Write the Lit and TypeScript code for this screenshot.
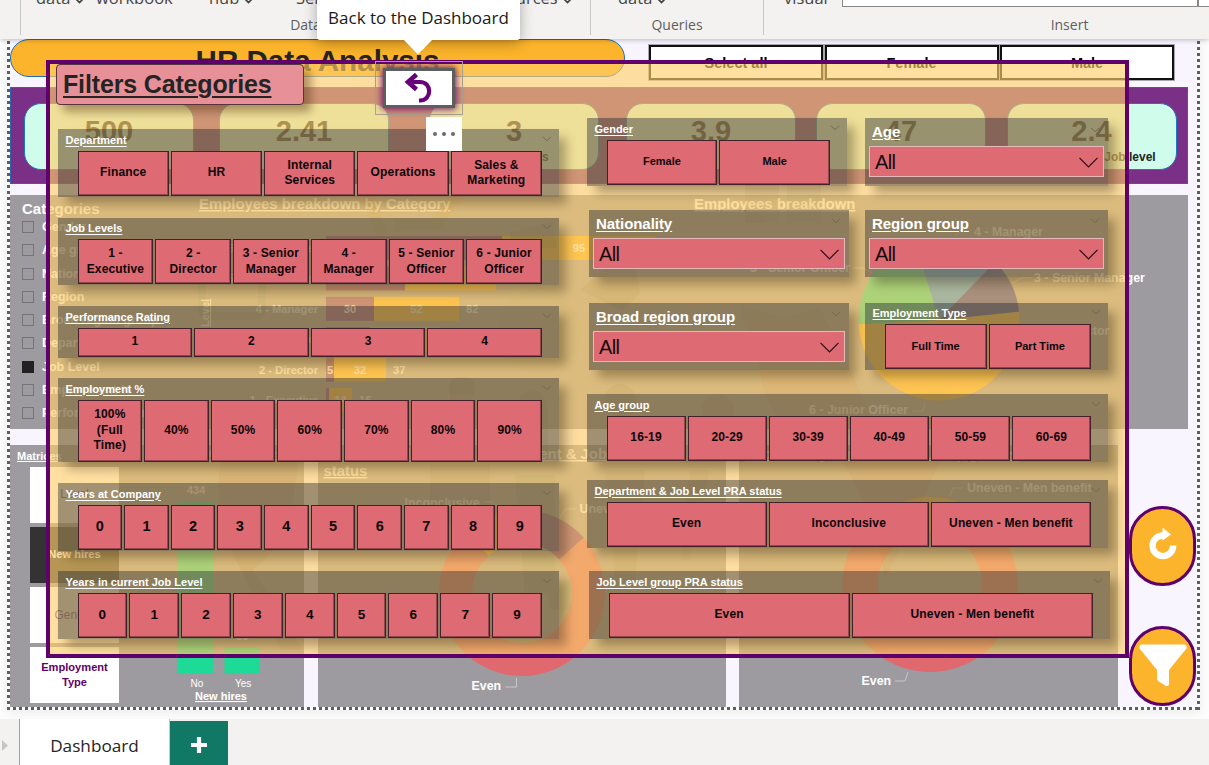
import { LitElement, html, css, svg } from "lit";
import { customElement, property } from "lit/decorators.js";

const arc = (cx: number, cy: number, r: number, ri: number, a: number, b: number) => {
  const p = (rad: number, d: number) => {
    const t = ((d - 90) * Math.PI) / 180;
    return `${(cx + rad * Math.cos(t)).toFixed(2)} ${(cy + rad * Math.sin(t)).toFixed(2)}`;
  };
  const big = b - a > 180 ? 1 : 0;
  return ri
    ? `M${p(r, a)}A${r} ${r} 0 ${big} 1 ${p(r, b)}L${p(ri, b)}A${ri} ${ri} 0 ${big} 0 ${p(ri, a)}Z`
    : `M${cx} ${cy}L${p(r, a)}A${r} ${r} 0 ${big} 1 ${p(r, b)}Z`;
};

@customElement("filter-card")
class FilterCard extends LitElement {
  @property() label = "";
  @property({ type: Array }) items: string[] = [];
  @property({ type: Boolean }) select = false;
  static styles = css`
    :host { display: block; box-sizing: border-box; position: relative; font-family: "Liberation Sans", Arial, sans-serif;
      background: rgba(22, 31, 44, 0.4); box-shadow: 8px 8px 10px -1px rgba(50, 35, 15, 0.36); padding: 0 17px 0 19.5px; }
    :host([select]) { padding: 0 4px; }
    .head { display: flex; justify-content: space-between; height: 21.5px; align-items: center; margin: 0 -8px 0 -12px; }
    .title { font-weight: 700; font-size: 11px; line-height: 14px; color: #fff; text-decoration: underline; text-underline-offset: 2px; white-space: nowrap; }
    .head svg { margin-right: -2px; flex: none; margin-top: -2px; }
    .tiles { display: flex; gap: 2px; height: var(--th, 45px); }
    .tile { flex: 1 1 0; min-width: 0; box-sizing: border-box; display: flex; align-items: center; justify-content: center; text-align: center;
      background: #de6a73; border: 1px solid #43202a; box-shadow: inset -1px -1px 0 #92444f; color: #0d0608;
      font-weight: 700; font-size: var(--fs, 12px); line-height: 15.5px; letter-spacing: var(--ls, 0.15px); padding: 0 var(--px, 5px); }
    :host([select]) .head { height: 28px; margin: 0 0 0 3px; }
    :host([select]) .title { font-size: 15px; line-height: 18px; letter-spacing: -0.05px; }
    :host([select]) .head svg { margin: -5px 4px 0 0; }
    .drop { height: 31px; box-sizing: border-box; border: 1px solid #e5b9bd; background: #de6a73; display: flex; align-items: center; justify-content: space-between;
      padding: 2px 5px 0; font-size: 20px; letter-spacing: -0.6px; color: #160a0c; }
  `;
  render() {
    return html`
      <div class="head"><span class="title">${this.label}</span>
        <svg width="10" height="6" viewBox="0 0 10 6"><path d="M1 .8 5 4.8 9 .8" fill="none" stroke="#716853" stroke-width="1" /></svg></div>
      ${this.select
        ? html`<div class="drop"><span>All</span><svg width="19" height="11" viewBox="0 0 19 11"><path d="M.5.8 9.5 9.8 18.5.8" fill="none" stroke="#2a1014" stroke-width="1.2" /></svg></div>`
        : html`<div class="tiles">${this.items.map((i) => html`<div class="tile"><span>${i}</span></div>`)}</div>`}
    `;
  }
}

@customElement("filter-panel")
class FilterPanel extends LitElement {
  static styles = css`
    :host { display: block; box-sizing: border-box; border: 4px solid #5f006c; outline: 0;
      background: rgba(255, 206, 106, 0.64); background-clip: padding-box; font-family: "Liberation Sans", Arial, sans-serif; }
    .top { display: flex; height: 54px; }
    .name { box-sizing: border-box; width: 248px; height: 41px; margin: 0 0 0 6px; padding-left: 6px; background: #e89098; border: 1px solid #57333a; border-radius: 4px;
      font-weight: 700; font-size: 25px; letter-spacing: -0.15px; line-height: 39px; color: #252423; text-decoration: underline; text-underline-offset: 3px; text-decoration-thickness: 2px; box-shadow: 7px 7px 9px rgba(70, 40, 10, 0.4); white-space: nowrap; }
    .frame { box-sizing: border-box; width: 88px; height: 54px; margin: -3px 0 0 71px; border: 1px solid #a9a391; padding: 6px 7px; }
    .back { box-sizing: border-box; height: 40px; border: 3px solid #5e5e5e; background: #fff; box-shadow: 0 0 7px 1px #6a1070; display: flex; justify-content: center; align-items: center; }
    .more { position: absolute; left: 376px; top: 53px; width: 36px; height: 34px; background: #fff; display: flex; gap: 5px; align-items: center; justify-content: center; z-index: 3; }
    .more i { width: 4px; height: 4px; border-radius: 50%; background: #6d6b69; }
    .cols { display: grid; grid-template-columns: 501px 523px; column-gap: 28px; padding-left: 8px; }
    .left { padding-top: 11px; }
    .pair { display: flex; align-items: flex-start; justify-content: space-between; width: 521px; }
    .l2, .l3, .l5 { margin-top: 21px; }
    .l4, .l6 { margin-top: 20.5px; }
    .h68 { height: 67.5px; }
    .h52 { height: 51.5px; --th: 29px; }
    .h84 { height: 84px; --th: 62px; }
    .num { --fs: 14.5px; --px: 0; }
    .num2 { --fs: 13.5px; --px: 0; }
    .narrow { width: 260px; }
    .narrow2 { width: 243px; }
    .small { --fs: 11px; --ls: 0; }
    .g24 { margin-top: 24px; }
    .g25 { margin-top: 25.5px; }
    .g18 { margin-top: 18.5px; }
    .g23 { margin-top: 23.5px; }
    .shift { margin-left: 2px; }
    .w { width: 521px; }
  `;
  render() {
    return html`
      <div class="top">
        <div class="name">Filters Categories</div>
        <div class="frame"><div class="back">
          <svg width="30" height="30" viewBox="0 0 30 30" fill="none" stroke="#68007a" stroke-width="4.2"><path d="M12.5 1.500 4 9l8.500 7.500" stroke-width="4.600" /><path d="M5 9h11c12.500 0 12 18.500 0 18.500h-1" /></svg>
        </div></div>
        <div class="more"><i></i><i></i><i></i></div>
      </div>
      <div class="cols">
        <div class="left">
          <filter-card class="h68" label="Department" .items=${["Finance", "HR", "Internal Services", "Operations", "Sales & Marketing"]}></filter-card>
          <filter-card class="h68 l2" label="Job Levels" .items=${["1 - Executive", "2 - Director", "3 - Senior Manager", "4 - Manager", "5 - Senior Officer", "6 - Junior Officer"]}></filter-card>
          <filter-card class="h52 l3" label="Performance Rating" .items=${["1", "2", "3", "4"]}></filter-card>
          <filter-card class="h84 l4" label="Employment %" .items=${["100% (Full Time)", "40%", "50%", "60%", "70%", "80%", "90%"]}></filter-card>
          <filter-card class="h68 l5 num" label="Years at Company" .items=${["0", "1", "2", "3", "4", "5", "6", "7", "8", "9"]}></filter-card>
          <filter-card class="h68 l6 num2" label="Years in current Job Level" .items=${["0", "1", "2", "3", "4", "5", "6", "7", "9"]}></filter-card>
        </div>
        <div class="right">
          <div class="pair">
            <filter-card class="h68 narrow small" label="Gender" .items=${["Female", "Male"]}></filter-card>
            <filter-card class="h68 narrow2" select label="Age"></filter-card>
          </div>
          <div class="pair g24">
            <filter-card class="h68 narrow shift" select label="Nationality"></filter-card>
            <filter-card class="h68 narrow2" select label="Region group"></filter-card>
          </div>
          <div class="pair g25">
            <filter-card class="h68 narrow shift" select label="Broad region group"></filter-card>
            <filter-card class="h68 narrow2 small" label="Employment Type" .items=${["Full Time", "Part Time"]}></filter-card>
          </div>
          <filter-card class="h68 w g24" label="Age group" .items=${["16-19", "20-29", "30-39", "40-49", "50-59", "60-69"]}></filter-card>
          <filter-card class="h68 w g18" label="Department & Job Level PRA status" .items=${["Even", "Inconclusive", "Uneven - Men benefit"]}></filter-card>
          <filter-card class="h68 w g23 shift" label="Job Level group PRA status" .items=${["Even", "Uneven - Men benefit"]}></filter-card>
        </div>
      </div>
    `;
  }
}

@customElement("app-root")
class AppRoot extends LitElement {
  static styles = css`
    :host { display: flex; flex-direction: column; width: 1209px; height: 765px; overflow: hidden; position: relative; background: #fdfdfd; font-family: "Liberation Sans", Arial, sans-serif; }
    .ribbon { height: 39px; flex: none; background: #f3f2f1; display: grid; grid-template-columns: 20px 570px 173px 446px; box-shadow: 0 1px 5px rgba(0, 0, 0, 0.25); position: relative; z-index: 1;
      font-family: "Open Sans", "Noto Sans", sans-serif; color: #484644; }
    .group { border-left: 1px solid #c8c6c4; height: 35px; display: flex; flex-direction: column; box-sizing: border-box; }
    .cmds { height: 18px; display: flex; font-size: 16.5px; line-height: 20px; overflow: hidden; }
    .cmds span { margin-top: -12px; height: 22px; white-space: nowrap; flex: none; box-sizing: border-box; }
    .caret { display: inline-block; margin-left: 5px; }
    .s1 { width: 75px; padding-left: 15px; } .s2 { width: 113px; } .s3 { width: 87px; } .s4 { width: 202px; } .s5 { padding-left: 27px; } .s6 { width: 78px; padding-left: 20px; }
    .gl { font-size: 14px; line-height: 20px; margin-top: 1px; color: #605e5c; text-align: center; }
    .ins { padding-left: 166px; }
    .box { box-sizing: border-box; height: 7px; width: 356px; background: #fff; border: 1px solid #8a8886; border-top: 0; flex: none; }
    .stage { box-sizing: border-box; width: 1193px; height: 671px; margin-left: 7px; flex: none; padding: 0 3px 3px; position: relative;
      background: repeating-linear-gradient(#5e5e5e 0 3px, #fff 3px 6px) 0 2px / 3px 100% no-repeat,
        repeating-linear-gradient(#5e5e5e 0 3px, #fff 3px 6px) 100% 2px / 3px 100% no-repeat,
        repeating-linear-gradient(90deg, #5e5e5e 0 3px, #fff 3px 6px) 0 100% / 100% 3px no-repeat, #f8f5ff; box-shadow: 0 2px 10px rgba(0, 0, 0, 0.08); }
    .row { display: flex; }
    .pill { box-sizing: border-box; width: 615px; height: 37.5px; border: 1px solid #1c6fb5; border-radius: 19px; background: #fbb42b; text-align: center; font-weight: 700; font-size: 29.6px; line-height: 41px; color: #252423; }
    .tops { display: flex; gap: 1.5px; margin: 6px 0 0 24px; }
    .tops div { box-sizing: border-box; width: 174px; height: 35px; border: 2px solid #111; outline: 1px solid #aaa6ae; background: #fff; text-align: center; font-weight: 700; font-size: 14.5px; line-height: 32px; }
    .kpis { box-sizing: border-box; display: flex; width: 1178px; height: 97.5px; margin-top: 6.5px; background: #7b3087; border: 1px solid #2a66b0; padding: 15.500px 0 0 13px; }
    .kpi { box-sizing: border-box; width: 170px; flex: none; height: 67px; border: 1px solid #1c78bf; border-radius: 17px; background: #d0fdeb; text-align: center; color: #252423; padding-top: 10.500px; }
    .kpi b { display: block; font-size: 29px; line-height: 32px; }
    .kpi span { font-weight: 700; font-size: 12px; line-height: 21px; display: block; white-space: nowrap; }
    .yrs { padding-left: 38px; } .lvl { padding-left: 77px; }
    .m25 { margin-left: 25px; } .m40 { margin-left: 40px; } .m27 { margin-left: 27px; } .m20 { margin-left: 20px; } .m21 { margin-left: 20.5px; }
    .sheet { width: 1178px; height: 234px; margin-top: 10.5px; background: #9e9ba0; display: flex; color: #fff; }
    .cats { width: 182px; padding: 5px 0 0 12px; box-sizing: border-box; font-weight: 700; flex: none; }
    .cats h3 { margin: 0 0 -2px; font-size: 15px; line-height: 18px; }
    .opt { display: flex; align-items: center; gap: 8px; height: 23.25px; font-size: 12.500px; white-space: nowrap; }
    .opt i { box-sizing: border-box; width: 12px; height: 12px; border: 1px solid #777479; flex: none; }
    .opt .on { background: #222; border-color: #222; }
    svg { display: block; flex: none; overflow: visible; }
    svg text { font-family: "Liberation Sans", Arial, sans-serif; font-weight: 700; fill: #fff; font-size: 12.4px; }
    svg .b { font-size: 11.2px; }
    svg .s { font-size: 11px; }
    svg .n { font-size: 10px; font-weight: 400; }
    svg .t { font-size: 14.9px; text-decoration: underline; }
    .bottom { display: flex; gap: 13.500px; margin-top: 16px; color: #fff; }
    .c1, .c2, .c3 { height: 262.500px; background: #9e9ba0; }
    .c1 { width: 294px; display: flex; } .c2 { width: 408px; } .c3 { width: 379px; }
    .mat { width: 108px; padding: 5px 0 0 7px; box-sizing: border-box; flex: none; }
    .mat b { font-size: 11px; text-decoration: underline; line-height: 13px; display: block; margin-bottom: 4px; }
    .mb { box-sizing: border-box; width: 89px; height: 56px; margin: 0 0 4.300px 13px; background: #fff; display: flex; align-items: center; justify-content: center; text-align: center; font-weight: 700; font-size: 11.100px; line-height: 15px; color: #5f006c; }
    .dark { background: #333; color: #fff; }
    .fade { font-weight: 400; font-size: 12px; color: #6b2b78; }
    .panel { position: absolute; left: 46px; top: 60px; width: 1083px; height: 598px; z-index: 2; }
    .art { position: absolute; left: 0; top: 0; z-index: 1; }
    .tip { position: absolute; left: 317px; top: -8px; width: 203px; height: 48px; border-radius: 3px; background: #fff; z-index: 5; box-shadow: 0 3px 14px rgba(0, 0, 0, 0.3); text-align: center; font: 17px/52px "Open Sans", sans-serif; color: #1b1a19; white-space: nowrap; }
    .tip svg { position: absolute; left: 86px; top: 47px; }
    .round { position: absolute; left: 1129px; box-sizing: border-box; width: 67px; height: 80px; border: 3.500px solid #5f006c; border-radius: 34px; background: #fbb42b; z-index: 3; display: flex; align-items: center; justify-content: center; }
    .r1 { top: 506px; padding-bottom: 7px; } .r2 { top: 626px; }
    .tabs { height: 46px; margin-top: 9px; background: #f3f2f1; display: flex; font-family: "Open Sans", sans-serif; flex: none; }
    .arrow { width: 19px; padding-top: 20px; box-sizing: border-box; }
    .tab { box-sizing: border-box; width: 151px; background: #fff; border-left: 1px solid #a19f9d; border-right: 1px solid #c8c6c4; text-align: center; font-size: 17.2px; line-height: 53px; color: #252423; }
    .plus { width: 58px; background: #117865; margin-top: 2px; display: flex; align-items: center; justify-content: center; padding-top: 4px; box-sizing: border-box; }
  `;

  private caret() {
    return html`<svg class="caret" width="9" height="6" viewBox="0 0 9 6"><path d="M1 1l3.500 3.500L8 1" fill="none" stroke="#444" stroke-width="1.700" /></svg>`;
  }

  private bars() {
    const rows: [string, number, number, string, string, string][] = [
      ["6 - Junior Officer", 502, 656, "", "", ""],
      ["5 - Senior Officer", 405, 496, "", "", ""],
      ["4 - Manager", 374, 459, "30", "52", "82"],
      ["3 - Senior Manager", 370, 440, "", "", ""],
      ["2 - Director", 334, 386, "5", "32", "37"],
      ["1 - Executive", 329, 352, "", "14", "16"],
    ];
    return svg`${rows.map(([n, a, b, p, q, t], i) => {
      const y = 41 + i * 30.4;
      return svg`<rect x="134" y=${y} width=${a - 326} height="24" fill="#7b3087"/><rect x=${a - 192} y=${y} width=${b - a} height="24" fill="#fbb42b"/>
        <text class="b" x="126" y=${y + 16} text-anchor="end">${n}</text><text class="b" x=${(326 + a) / 2 - 192} y=${y + 16} text-anchor="middle">${p}</text>
        <text class="b" x=${(a + b) / 2 - 192} y=${y + 16} text-anchor="middle">${i ? q : "95"}</text><text class="b" x=${b - 192 + 7} y=${y + 16}>${t}</text>`;
    })}`;
  }

  render() {
    const opts = ["Gender", "Age group", "Nationality", "Region", "Broad region group", "Department", "Job Level", "Employment %", "Performance rating"];
    return html`
      <div class="ribbon">
        <div></div>
        <div class="group"><div class="cmds"><span class="s1">data${this.caret()}</span><span class="s2">workbook</span><span class="s3">hub${this.caret()}</span><span class="s4">Server</span><span>sources${this.caret()}</span></div><div class="gl">Data</div></div>
        <div class="group"><div class="cmds"><span class="s5">data${this.caret()}</span></div><div class="gl">Queries</div></div>
        <div class="group"><div class="cmds"><span class="s6">visual</span><div class="box"></div><div class="box"></div></div><div class="gl ins">Insert</div></div>
      </div>
      <div class="stage">
        <div class="row"><div class="pill">HR Data Analysis</div><div class="tops"><div>Select all</div><div>Female</div><div>Male</div></div></div>
        <div class="kpis">
          <div class="kpi"><b>500</b></div><div class="kpi m25"><b>2.41</b></div>
          <div class="kpi m40"><b>3</b><span class="yrs">years</span></div>
          <div class="kpi m27"><b>3.9</b></div><div class="kpi m20"><b>47</b></div>
          <div class="kpi m21"><b>2.4</b><span class="lvl">Job level</span></div>
        </div>
        <div class="sheet">
          <div class="cats"><h3>Categories</h3>${opts.map((o) => html`<div class="opt"><i class=${o === "Job Level" ? "on" : ""}></i>${o}</div>`)}</div>
          <svg width="398" height="234" viewBox="0 0 398 234">
            <text class="t" x="7" y="14">Employees breakdown by Category</text>
            <text class="s" transform="translate(17 132) rotate(-90)" text-decoration="underline">Level</text>
            ${this.bars()}
          </svg>
          <svg width="598" height="234" viewBox="590 195 598 234">
            <text class="t" x="694" y="209">Employees breakdown</text>
            <path d=${arc(939, 320, 80.5, 0, 84, 267)} fill="#fbb42b"/><path d=${arc(939, 320, 80.5, 0, 267, 343)} fill="#1ddb97"/>
            <path d=${arc(939, 320, 80.5, 0, 343, 404)} fill="#118dff"/><path d=${arc(939, 320, 80.5, 0, 44, 84)} fill="#12239e"/>
            <text x="974" y="236">4 - Manager</text><text x="1034" y="282">3 - Senior Manager</text><text x="1044" y="335">2 - Director</text>
            <text x="809" y="414">6 - Junior Officer</text><text x="750" y="272">5 - Senior Officer</text>
            <path d="M1012 283l9-5h11M912 411h11l2-9M853 268h10l9 5M955 236l5-5h10" fill="none" stroke="#c8c6ca"/>
          </svg>
        </div>
        <div class="bottom">
          <div class="c1">
            <div class="mat"><b>Matrices</b><div class="mb fade">Level</div><div class="mb dark">New hires</div><div class="mb fade">Gender</div><div class="mb">Employment<br />Type</div></div>
            <svg width="186" height="262" viewBox="118 445 186 262">
              <text x="155" y="458" class="t">Employees by gender</text>
              <rect x="178" y="502" width="35.500" height="171.500" fill="#1ddb97"/><rect x="224.500" y="647" width="35.500" height="26.500" fill="#1ddb97"/>
              <text class="s" x="187" y="494">434</text><text class="s" x="236" y="640">66</text>
              <text class="n" x="190.500" y="687">No</text><text class="n" x="235" y="687">Yes</text>
              <text class="s" x="195" y="700" text-decoration="underline">New hires</text>
            </svg>
          </div>
          <div class="c2"><svg width="408" height="262" viewBox="317.500 445 408 262">
            <text class="t" x="374" y="459">Employees by Department &amp; Job Level PRA</text><text class="t" x="323" y="476">status</text>
            <path d=${arc(521.5, 593, 83, 50, 48, 348)} fill="#e0686f"/><path d=${arc(521.5, 593, 83, 50, 0, 48)} fill="#7b3087"/><path d=${arc(521.5, 593, 83, 50, 318, 360)} fill="#fbb42b"/>
            <text x="404" y="507">Inconclusive</text><text x="579" y="513">Uneven - Men benefit</text><text x="471" y="690">Even</text>
            <path d="M505 687h11v-9M560 517l5-8h10M483 502h9l5 5" fill="none" stroke="#c8c6ca"/>
          </svg></div>
          <div class="c3"><svg width="379" height="262" viewBox="739 445 379 262">
            <text class="t" x="745" y="459">Job Level group PRA status by gender</text>
            <path d=${arc(930, 584.5, 87.5, 52, 36, 360)} fill="#e0686f"/><path d=${arc(930, 584.5, 87.5, 52, -18, 38)} fill="#fbb42b"/>
            <text x="967" y="492">Uneven - Men benefit</text><text x="861.500" y="685">Even</text>
            <path d="M895 681h10l3-9M950 496l3-8h10" fill="none" stroke="#c8c6ca"/>
          </svg></div>
        </div>
      </div>
      <div class="tabs">
        <div class="arrow"><svg width="10" height="13" viewBox="0 0 10 13"><path d="M2 1v11l6-5.500z" fill="#c8c6c4"/></svg></div>
        <div class="tab">Dashboard</div>
        <div class="plus"><svg width="18" height="18" viewBox="0 0 18 18"><path d="M9 1v16M1 9h16" stroke="#fff" stroke-width="4.200"/></svg></div>
      </div>
      <svg class="art" width="1209" height="765" viewBox="0 0 1209 765">
        <g opacity=".13">
          <path d="M365 190l18 45M395 225h40l25-35" fill="none" stroke="#b05a00" stroke-width="12"/>
          <path d="M202 270v38q0 8 8 8h44q8 0 8-8v-38" fill="none" stroke="#1a6b3a" stroke-width="8"/>
          <path d="M510 232l43-10 4 26h-47zM580 290l50-45 10 48-18 18z" fill="#3a3a20"/>
          <circle cx="540" cy="330" r="42" fill="#86866a"/><circle cx="620" cy="400" r="16" fill="#3a3a20"/>
          <path d="M450 395q-5-18 12-18t11 18z" fill="#222"/><path d="M450 395h22v12h-22z" fill="#d05050"/>
          <path d="M520 395q28-15 28 25v30h-28z" fill="#554"/><circle cx="718" cy="410" r="16" fill="#803030"/>
          <path d="M740 305l40 12 40-8 20 40 40 85h-80q-30-10-40-60z" fill="#c03818"/>
          <path d="M220 460h78q-5 80-45 110l50 80h-22l-45-90q-22-40-16-100z" fill="#702020"/>
          <path d="M430 465h60v60h-60zM745 185h34v38h-34zM787 185h34v38h-34z" fill="#555"/>
          <path d="M515 475h40v120h-30zM545 580h26v30h-20z" fill="#0a7040"/>
          <path d="M605 470h40l-10 110h-20zM690 470h20l-20 90h-10z" fill="#553"/>
          <path d="M835 450h110l-60 130q-10-70-50-130z" fill="#a03030"/>
        </g>
      </svg>
      <filter-panel class="panel"></filter-panel>
      <div class="round r1"><svg width="30" height="32" viewBox="0 0 30 32"><path d="M15.500 8.500a10.300 10.300 0 1 0 9.700 10" fill="none" stroke="#fff" stroke-width="6.400"/><path d="M14.500 .5l8.500 7-8.500 6z" fill="#fff"/></svg></div>
      <div class="round r2"><svg width="50" height="46" viewBox="0 0 50 46"><path d="M4 1.500h42q3 0 2.500 4L31 27v14q0 2-3 2l-8-5q-1-1-1-3v-8L1.500 5.500Q1 1.500 4 1.500z" fill="#fff"/></svg></div>
      <div class="tip">Back to the Dashboard<svg width="30" height="16" viewBox="0 0 30 16"><path d="M0 0h30L15 15.500z" fill="#fff"/></svg></div>
    `;
  }
}
